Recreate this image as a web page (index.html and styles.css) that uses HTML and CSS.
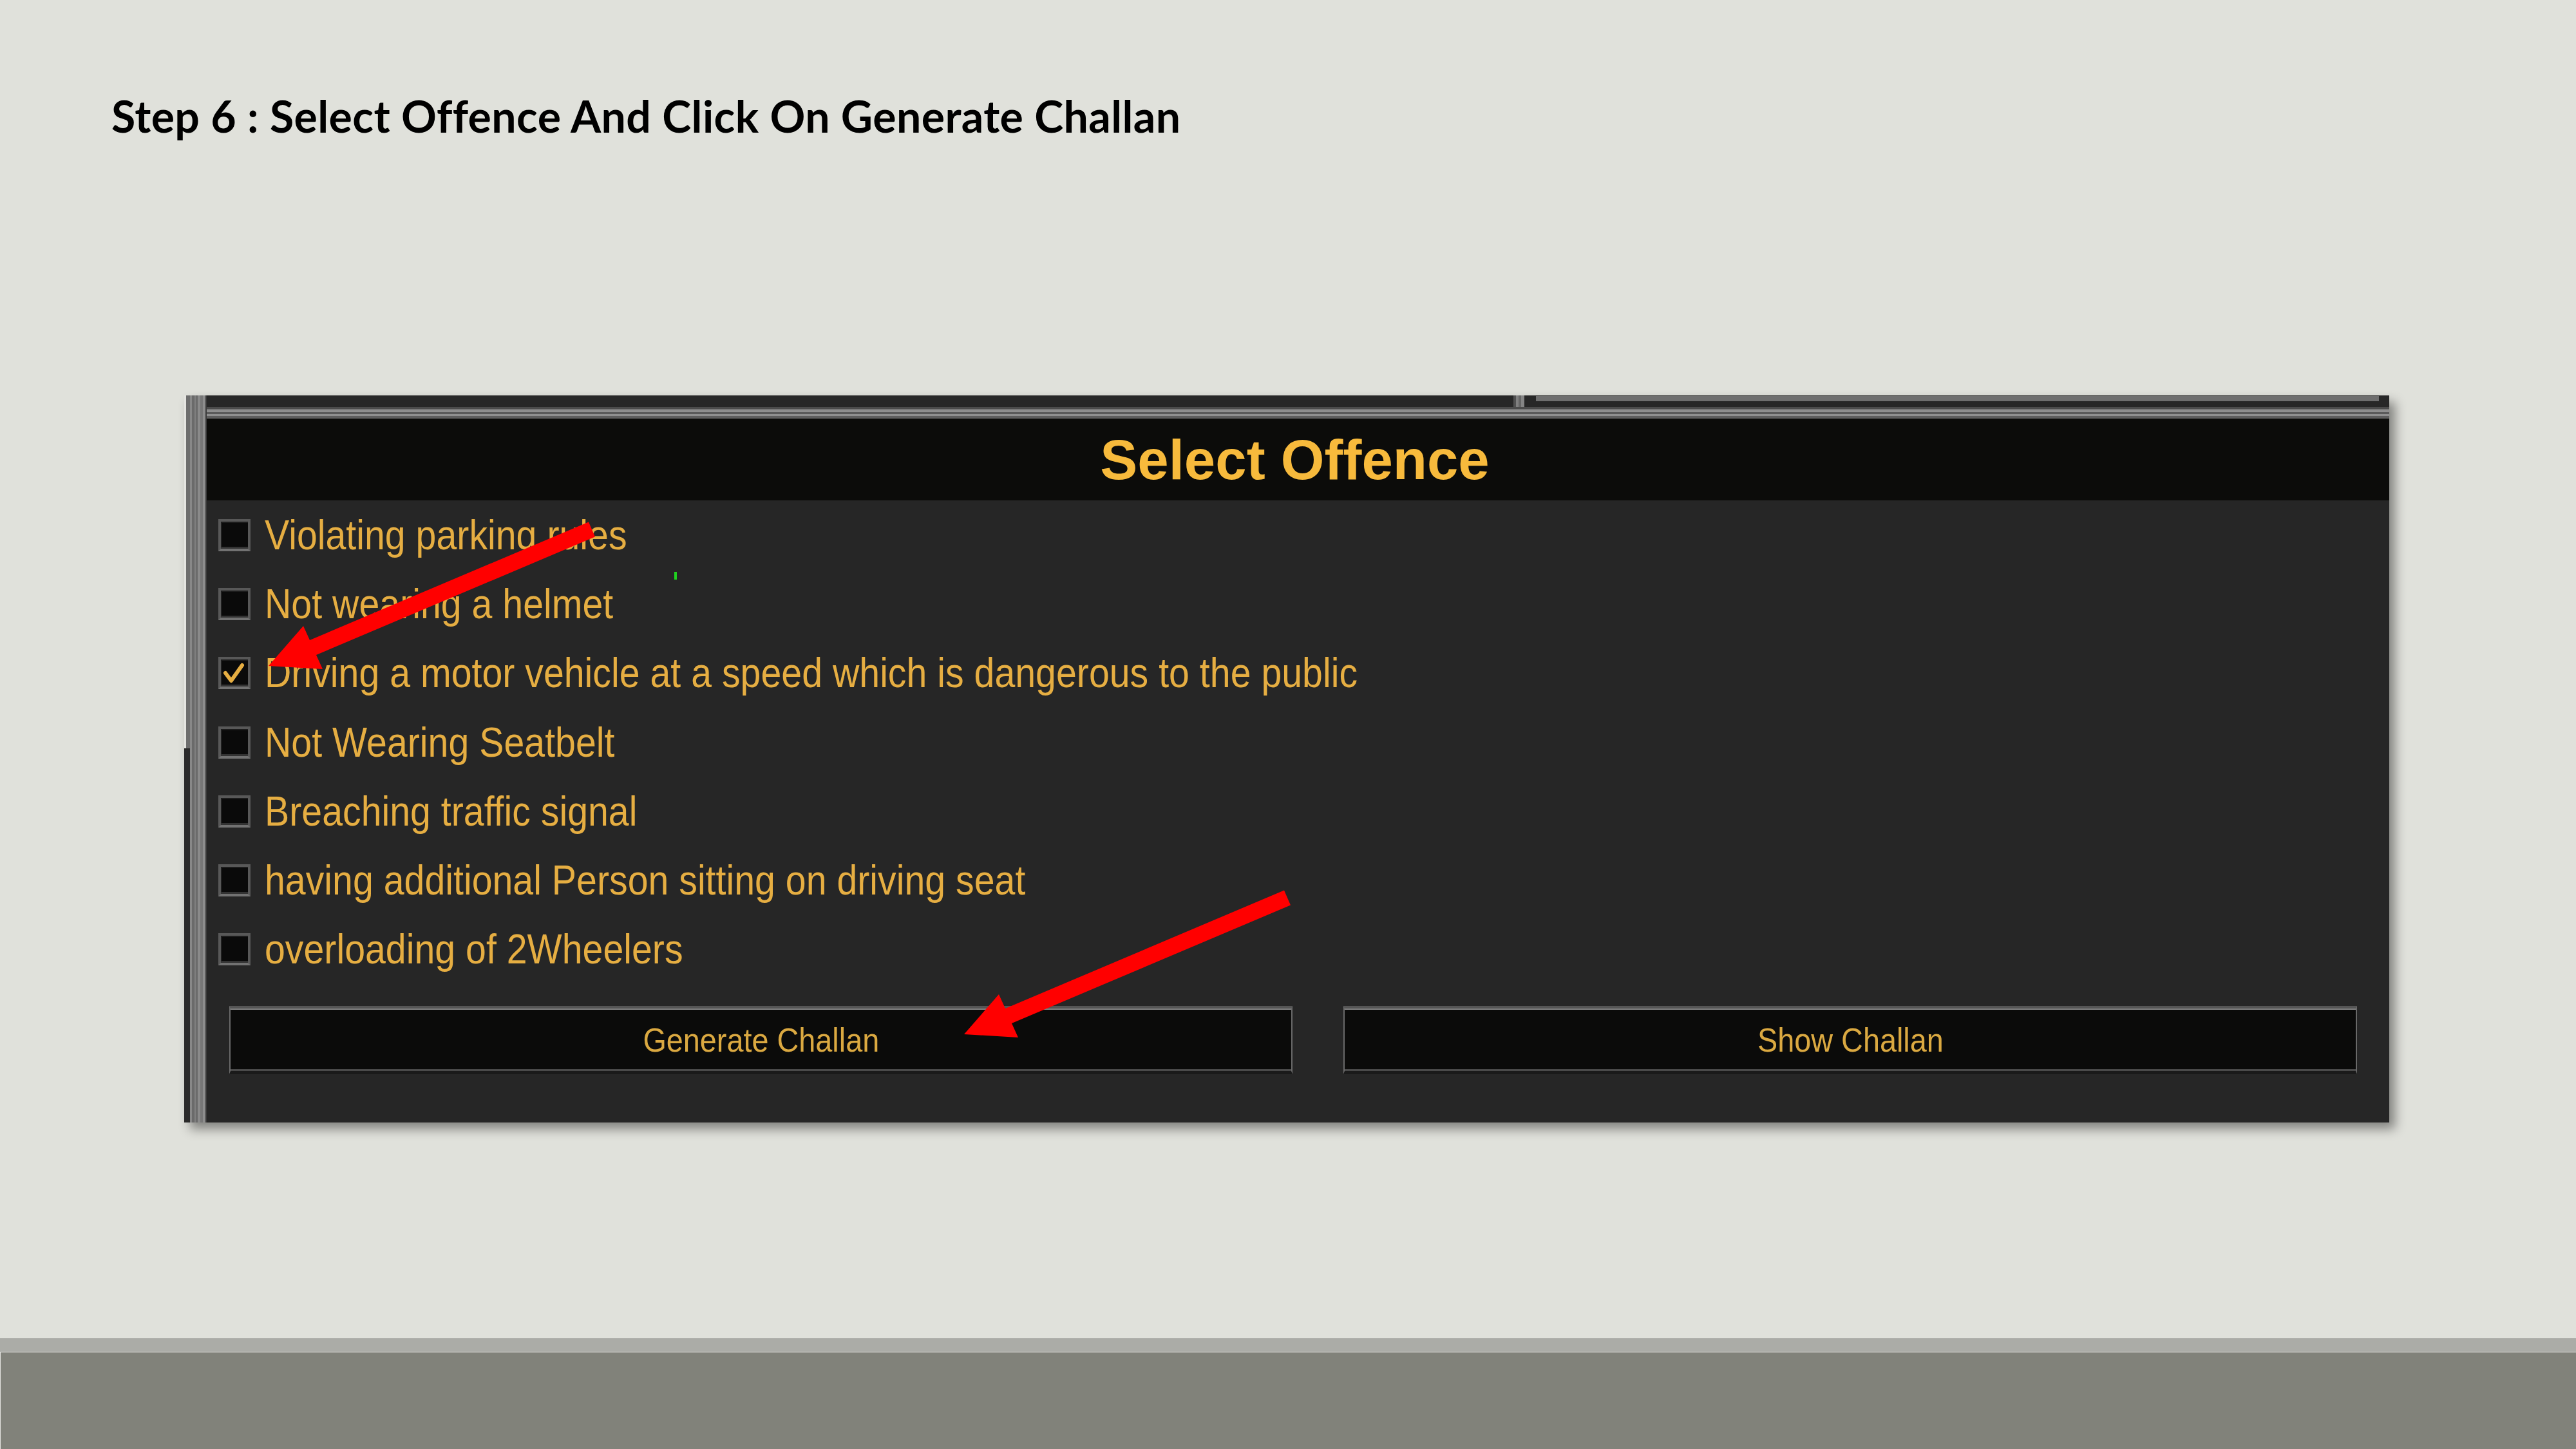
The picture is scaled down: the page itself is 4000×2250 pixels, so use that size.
FILE: index.html
```html
<!DOCTYPE html>
<html>
<head>
<meta charset="utf-8">
<link rel="stylesheet" href="styles.css">
</head>
<body>
<div class="page">
  <h1 class="title">Step 6 : Select Offence And Click On Generate Challan</h1>

  <div class="panel">
    <div class="edge-left">
      <div class="edge-left-top"></div>
      <div class="edge-left-bottom"></div>
    </div>
    <div class="panel-main">
      <div class="topstrip">
        <div class="ts-left"></div>
        <div class="ts-sep"></div>
        <div class="ts-right"><div class="ts-line"></div></div>
      </div>
      <div class="rule"></div>
      <div class="header">Select Offence</div>
      <div class="body">
        <ul class="offences">
          <li class="offence"><span class="box"></span><span class="label">Violating parking rules</span></li>
          <li class="offence"><span class="box"></span><span class="label">Not wearing a helmet</span></li>
          <li class="offence"><span class="box checked"><svg class="tick" viewBox="0 0 50 50"><polyline points="11,25 20,37 37,13"/></svg></span><span class="label">Driving a motor vehicle at a speed which is dangerous to the public</span></li>
          <li class="offence"><span class="box"></span><span class="label">Not Wearing Seatbelt</span></li>
          <li class="offence"><span class="box"></span><span class="label">Breaching traffic signal</span></li>
          <li class="offence"><span class="box"></span><span class="label">having additional Person sitting on driving seat</span></li>
          <li class="offence"><span class="box"></span><span class="label">overloading of 2Wheelers</span></li>
        </ul>
        <div class="actions">
          <button class="btn"><span class="btn-text">Generate Challan</span></button>
          <button class="btn"><span class="btn-text">Show Challan</span></button>
        </div>
      </div>
    </div>
    <div class="edge-right"></div>
  </div>

  <footer class="footer">
    <div class="footer-band"></div>
    <div class="footer-main"></div>
  </footer>

  <span class="green-dot"></span>
  <svg class="arrows" viewBox="0 0 4000 2250" width="4000" height="2250">
    <polygon class="arrow" points="924,833.5 914,810.5 481,994 471,972 417,1034 501,1039 491,1017"/>
    <polygon class="arrow" points="2004,1405.5 1994,1382.5 1561,1566 1551,1544 1497,1606 1581,1611 1571,1589"/>
  </svg>
</div>
</body>
</html>
```
FILE: styles.css
```css
html, body {
  margin: 0;
  padding: 0;
}
body {
  background: #e0e1db;
  width: 4000px;
  height: 2250px;
  overflow: hidden;
}
.page {
  position: relative;
  width: 4000px;
  height: 2250px;
  display: flex;
  flex-direction: column;
}
.title {
  margin: 140px 0 0 173px;
  font-family: Lato, "Open Sans", sans-serif;
  font-weight: 700;
  font-size: 68px;
  letter-spacing: 0.4px;
  line-height: 80px;
  color: #000;
}
.panel {
  margin: 394px 0 0 286px;
  width: 3424px;
  display: flex;
  box-shadow: 9px 10px 16px rgba(0, 0, 0, 0.42);
}
.edge-left {
  width: 35px;
  display: flex;
  flex-direction: column;
}
.edge-left-top,
.edge-left-bottom {
  background: linear-gradient(to right,
    #6d6d6d 0, #6d6d6d 9px,
    #888 9px, #888 12px,
    #6a6a6a 12px, #6a6a6a 16px,
    #7f7f7f 16px, #7f7f7f 18px,
    #6b6b6b 18px, #6b6b6b 21px,
    #8a8a8a 21px, #8a8a8a 25px,
    #777 25px, #777 29px,
    #8d8d8d 29px, #8d8d8d 33px,
    #3a3a3a 33px, #3a3a3a 35px);
}
.edge-left-top {
  height: 548px;
  box-shadow: inset 3px 0 0 #e4e4e0;
}
.edge-left-bottom {
  flex: 1;
  box-shadow: inset 9px 0 0 #2a2a2a;
}
.panel-main {
  flex: 1;
  display: flex;
  flex-direction: column;
}
.topstrip {
  height: 18px;
  background: #272727;
  display: flex;
}
.ts-left {
  width: 2029px;
}
.ts-sep {
  width: 17px;
  background: linear-gradient(to right, #505050 0, #505050 4px, #808080 4px, #808080 8px, #666 8px, #666 12px, #858585 12px, #858585 17px);
}
.ts-right {
  flex: 1;
  padding: 1px 16px 0 18px;
}
.ts-line {
  height: 8px;
  background: #6e6e6e;
}
.rule {
  height: 18px;
  background: linear-gradient(to bottom,
    #4c4c4c 0, #4c4c4c 3px,
    #7a7a7a 3px, #7a7a7a 5px,
    #8f8f8f 5px, #8f8f8f 8px,
    #5a5a5a 8px, #5a5a5a 11px,
    #909090 11px, #909090 14px,
    #5e5e5e 14px, #5e5e5e 18px);
}
.header {
  height: 127px;
  background: #0c0c0a;
  display: flex;
  align-items: center;
  justify-content: center;
  font-family: "Liberation Sans", Arial, sans-serif;
  font-weight: 700;
  font-size: 87px;
  color: #f7ba3c;
  padding-right: 10px;
}
.body {
  height: 966px;
  box-sizing: border-box;
  background: #262626;
  padding: 0;
}
.offences {
  list-style: none;
  margin: 0;
  padding: 0 0 0 18px;
  display: flex;
  flex-direction: column;
}
.offence {
  height: 107.3px;
  display: flex;
  align-items: center;
}
.box {
  width: 50px;
  height: 50px;
  box-sizing: border-box;
  background: #0a0a0a;
  border: 4px solid #585858;
  border-bottom-color: #727272;
  box-shadow: inset 0 -3px 0 #333, inset 2px 2px 0 #1c1c1c;
  flex: none;
  position: relative;
}
.tick {
  position: absolute;
  left: -4px;
  top: -4px;
  width: 50px;
  height: 50px;
}
.tick polyline {
  fill: none;
  stroke: #e6ae42;
  stroke-width: 6;
  stroke-linecap: round;
  stroke-linejoin: round;
}
.label {
  display: inline-block;
  margin-left: 22px;
  font-family: "Liberation Sans", Arial, sans-serif;
  font-size: 64px;
  color: #e6ae42;
  white-space: nowrap;
  transform: scaleX(0.895);
  transform-origin: left center;
}
.actions {
  display: grid;
  grid-template-columns: 1651px 1574px;
  column-gap: 79px;
  padding-left: 35px;
  margin-top: 34px;
}
.btn {
  height: 106px;
  box-sizing: border-box;
  margin: 0;
  padding: 0;
  background: #0b0b0a;
  border-top: 4px solid #555;
  border-left: 2px solid #6a6a6a;
  border-right: 2px solid #6a6a6a;
  border-bottom: 5px solid #1a1a1a;
  box-shadow: inset 0 2px 0 #7e7e7e, inset 0 -3px 0 #4a4a4a;
  display: flex;
  align-items: center;
  justify-content: center;
}
.btn-text {
  display: inline-block;
  font-family: "Liberation Sans", Arial, sans-serif;
  font-size: 52px;
  color: #dba941;
  transform: scaleX(0.9);
  white-space: nowrap;
}
.footer {
  margin-top: auto;
  height: 172px;
  display: flex;
  flex-direction: column;
}
.footer-band {
  height: 21px;
  background: #abaca7;
}
.footer-main {
  flex: 1;
  background: #81827a;
  border-top: 1px solid #e6e6e2;
  border-left: 1px solid #e6e6e2;
}
.green-dot {
  position: absolute;
  left: 1047px;
  top: 888px;
  width: 4px;
  height: 12px;
  background: #1fd11f;
}
.arrows {
  position: absolute;
  left: 0;
  top: 0;
  pointer-events: none;
}
.arrow {
  fill: #ff0000;
}
```
